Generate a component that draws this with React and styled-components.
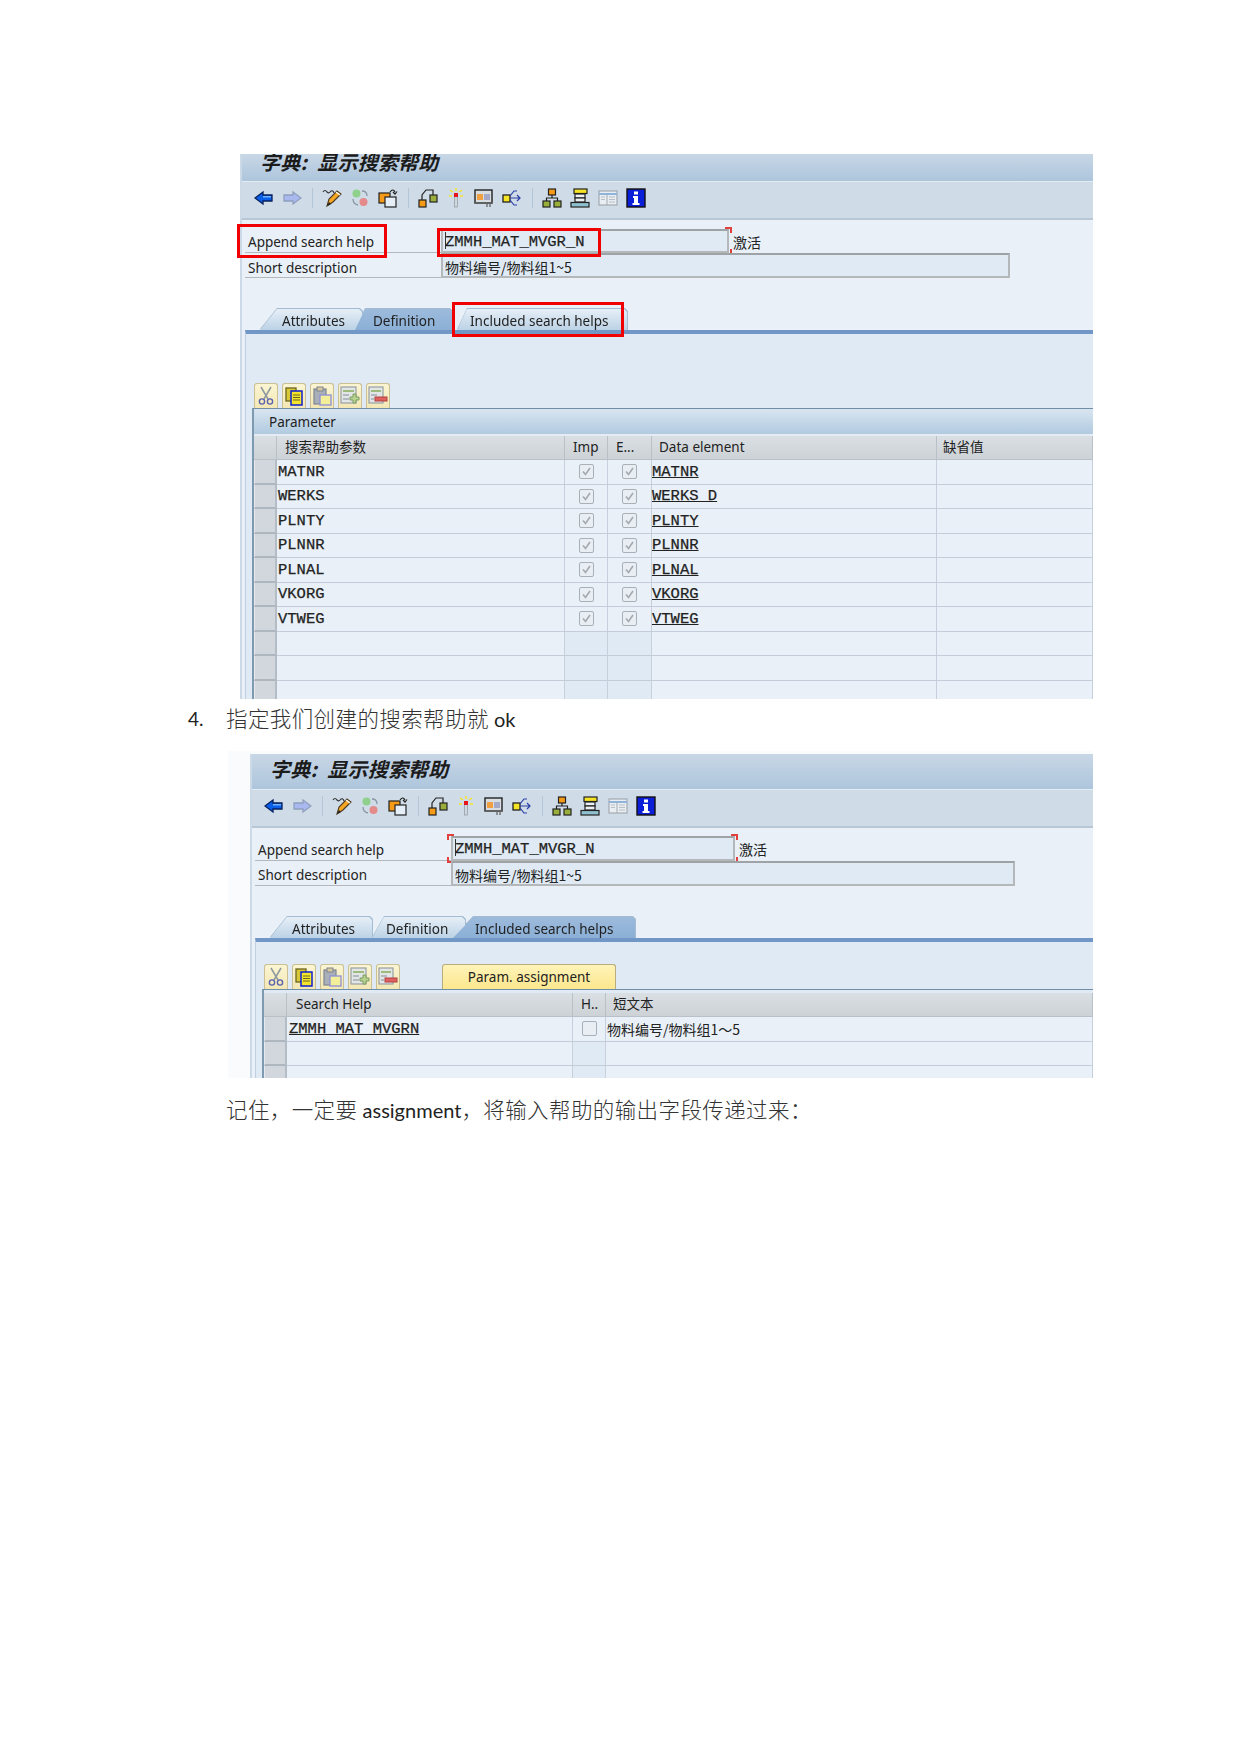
import { createGlobalStyle } from "styled-components";
import styled from "styled-components";

const UI_FONT = `"Noto Sans", "Liberation Sans", "Noto Sans CJK SC", sans-serif`;
const MONO_FONT = `"Liberation Mono", "Noto Sans CJK SC", monospace`;
const CJK_FONT = `"Noto Sans CJK SC", "Liberation Sans", sans-serif`;

const Global = createGlobalStyle`
  html, body { margin: 0; padding: 0; background: #fff; }
  * { box-sizing: border-box; }
`;

const Page = styled.div`
  padding-top: 154px;
  height: 1754px;
  overflow: hidden;
  color: #222;
  font-family: ${UI_FONT};
`;

const Shot = styled.div`
  position: relative;
  margin-left: ${(p) => p.$left}px;
  width: ${(p) => 1093 - p.$left}px;
  height: ${(p) => p.$height}px;
  padding: ${(p) => (p.$pale ? "3px 0 0 22px" : "0")};
  background: ${(p) => (p.$pale ? "#fafbfc" : "transparent")};
`;

const Screen = styled.div`
  display: flex;
  flex-direction: column;
  height: 100%;
  background: #e9f0f7;
  border-left: 2px solid #ccd9e6;
  overflow: hidden;
`;

const Title = styled.div`
  flex: none;
  height: ${(p) => p.$height}px;
  padding-left: 18px;
  overflow: hidden;
  background: linear-gradient(#c8d7e6, #adc5dc);
`;

const TitleText = styled.div`
  margin-top: ${(p) => p.$shift}px;
  font: italic 700 20px/32px ${CJK_FONT};
  letter-spacing: 0.2px;
  color: #1c1c1c;
`;

const Toolbar = styled.div`
  flex: none;
  display: flex;
  align-items: center;
  height: 39px;
  padding: 0 0 4px 8px;
  background: #cfdce7;
  border-top: 1px solid #e3ebf3;
  border-bottom: 2px solid #b8c7d6;
`;

const ToolGroup = styled.div`
  display: flex;
`;

const ToolSlot = styled.div`
  width: 28px;
  display: flex;
  justify-content: center;
`;

const ToolSep = styled.div`
  width: 12px;
  display: flex;
  justify-content: center;
  &::before {
    content: "";
    width: 1px;
    height: 20px;
    background: #b3c5d6;
  }
`;

const Form = styled.div`
  flex: none;
  padding: ${(p) => p.$top}px 0 ${(p) => p.$bottom}px 3px;
`;

const FormRow = styled.div`
  display: flex;
  height: ${(p) => p.$height}px;
`;

const FieldLabel = styled.div`
  width: 196px;
  padding-left: 3px;
  font-size: 13.5px;
  line-height: ${(p) => p.$line}px;
  border-bottom: 1px solid #b4b8bc;
`;

const FieldBox = styled.div`
  position: relative;
  width: ${(p) => p.$width}px;
  height: 100%;
  padding-left: 2px;
  white-space: nowrap;
  font: ${(p) => (p.$mono ? `15.5px/23px ${MONO_FONT}` : `14px/24px ${CJK_FONT}`)};
  -webkit-text-stroke: ${(p) => (p.$mono ? "0.25px" : "0")};
  background: #dfeaf4;
  border: 2px solid #b4b8ba;
  border-top-color: #a0a3a5;
`;

const Caret = styled.span`
  display: inline-block;
  width: 1px;
  height: 17px;
  margin-right: -1px;
  vertical-align: -3px;
  background: #333;
`;

const RequiredMark = styled.span`
  position: absolute;
  width: 7px;
  height: 6px;
  ${(p) => (p.$right ? "right: -5px;" : "left: -6px;")}
  ${(p) => (p.$bottom ? "bottom: -4px;" : "top: -4px;")}
  border: 0 solid #e0413f;
  ${(p) => (p.$bottom ? "border-bottom-width: 2px;" : "border-top-width: 2px;")}
  ${(p) => (p.$right ? "border-right-width: 2px;" : "border-left-width: 2px;")}
`;

const StatusText = styled.span`
  margin-left: 4px;
  font: 14px/26px ${CJK_FONT};
`;

const TabStrip = styled.div`
  flex: none;
  display: flex;
  height: 21px;
  padding-left: 18px;
  filter: drop-shadow(0 -1px 0 #a3bbd3) drop-shadow(1px 0 0 #a3bbd3);
`;

const Tab = styled.div`
  position: relative;
  z-index: ${(p) => (p.$active ? 2 : 1)};
  width: ${(p) => p.$width}px;
  margin-left: ${(p) => p.$overlap}px;
  padding-left: ${(p) => p.$textLeft}px;
  font-size: 13.5px;
  line-height: 24px;
  white-space: nowrap;
  clip-path: polygon(0 100%, ${(p) => p.$slant}px 0, calc(100% - 3px) 0, 100% 3px, 100% 100%);
  background: ${(p) =>
    p.$active ? "linear-gradient(#9dbbdc, #8bafd6)" : "linear-gradient(#e6eff7, #bcd2e6)"};
`;

const Panel = styled.div`
  flex: 1;
  min-height: 0;
  margin-left: 3px;
  padding: ${(p) => p.$top}px 0 0 8px;
  background: #dfeaf4;
  border-left: 1px solid #bfcfdf;
  border-top: 4px solid #7097c6;
`;

const ButtonRow = styled.div`
  display: flex;
  gap: 4px;
  height: 25px;
`;

const TableButton = styled.div`
  width: 24px;
  height: 25px;
  display: flex;
  align-items: center;
  justify-content: center;
  background: linear-gradient(#fbf5d2, #f3e7b4);
  border: 1px solid #cabf95;
  border-bottom: none;
  border-radius: 3px 3px 0 0;
`;

const TextButton = styled.div`
  width: 174px;
  height: 25px;
  margin-left: 38px;
  text-align: center;
  font-size: 13.5px;
  line-height: 25px;
  background: linear-gradient(#fff3b8, #fbe78e);
  border: 1px solid #b9ad7f;
  border-bottom: none;
  border-radius: 3px 3px 0 0;
`;

const Table = styled.div`
  margin-left: -2px;
  padding-top: ${(p) => p.$gap || 0}px;
  border-top: 1px solid #708fa6;
  border-left: 2px solid #7e9ab0;
`;

const TableTitle = styled.div`
  height: 27px;
  padding-left: 15px;
  font-size: 13.5px;
  line-height: 26px;
  border-bottom: 2px solid #e4ebf2;
  background: linear-gradient(#d8e5f0, #b1cae0);
`;

const Row = styled.div`
  display: grid;
  grid-template-columns: ${(p) => p.$columns};
  height: ${(p) => (p.$head ? 24 : 24.5)}px;
`;

const HeadCell = styled.div`
  padding-left: ${(p) => p.$pad}px;
  font-size: 13.5px;
  line-height: 23px;
  white-space: nowrap;
  overflow: hidden;
  background: linear-gradient(#dadfe4, #cdd2d7);
  border-right: 1px solid #b9c0c8;
  border-bottom: 1px solid #b9c0c8;
`;

const Selector = styled.div`
  background: #d1d7dd;
  border-right: 2px solid #b4bcc6;
  border-bottom: 2px solid #aeb6c0;
  border-left: 1px solid #e6eaee;
`;

const Cell = styled.div`
  display: flex;
  align-items: center;
  justify-content: ${(p) => (p.$center ? "center" : "flex-start")};
  padding-left: ${(p) => p.$pad ?? 1}px;
  min-width: 0;
  white-space: nowrap;
  font: ${(p) => (p.$cjk ? `14px/22px ${CJK_FONT}` : `15.5px/22px ${MONO_FONT}`)};
  -webkit-text-stroke: ${(p) => (p.$cjk ? "0" : "0.25px")};
  text-decoration: ${(p) => (p.$link ? "underline" : "none")};
  background: ${(p) => (p.$tint ? "#dfeaf4" : "#e9f0f7")};
  border-right: 1px solid #c6d0dc;
  border-bottom: 1px solid #c3ccd8;
`;

const CheckBox = styled.div`
  width: 15px;
  height: 15px;
  display: flex;
  align-items: center;
  justify-content: center;
  background: #e8eef4;
  border: 1px solid #a9b0b8;
  border-radius: 2px;
`;

const Highlight = styled.div`
  position: absolute;
  left: ${(p) => p.$x}px;
  top: ${(p) => p.$y}px;
  width: ${(p) => p.$w}px;
  height: ${(p) => p.$h}px;
  border: 3px solid #f00000;
  pointer-events: none;
`;

const Para = styled.div`
  display: flex;
  align-items: center;
  height: ${(p) => p.$height}px;
  padding-left: ${(p) => p.$left}px;
  padding-bottom: ${(p) => p.$lift || 0}px;
  font: 300 21.5px/1 ${CJK_FONT};
  letter-spacing: 0.4px;
  color: #333;
  white-space: nowrap;
`;

const Marker = styled.span`
  width: 38px;
  font: 19px/1 Lato, sans-serif;
  letter-spacing: 0;
  color: #222;
`;

const Latin = styled.span`
  font: 20px/1 Lato, sans-serif;
  letter-spacing: 0;
  color: #222;
`;

const Icon = ({ children, size = 20 }) => (
  <svg width={size} height={size} viewBox="0 0 20 20">
    {children}
  </svg>
);

const BackIcon = () => (
  <Icon>
    <path d="M1 10 L9 4 V7 H18 V13 H9 V16 Z" fill="#0a5fe8" stroke="#06205c" strokeWidth="1.3" />
    <path d="M9 8 H17 V9.5 H9 Z" fill="#6fb1ff" />
  </Icon>
);

const ForwardIcon = () => (
  <Icon>
    <path d="M19 10 L11 4 V7 H2 V13 H11 V16 Z" fill="#a9b8ee" stroke="#8f9fbe" strokeWidth="1.3" />
  </Icon>
);

const PencilIcon = () => (
  <Icon>
    <path d="M1 4 Q3 1 5 4 Q7 6 9 3 Q11 2 12 5" fill="none" stroke="#333" strokeWidth="1.2" />
    <path d="M5 18 L7 11 L15 3 L19 6 L11 14 Z" fill="#f5a623" stroke="#4a3a20" strokeWidth="1.1" />
    <path d="M5 18 L7 14 L9 16 Z" fill="#222" />
    <path d="M14 4 L18 7" stroke="#f4f4f4" strokeWidth="1.5" />
  </Icon>
);

const ActivateIcon = () => (
  <Icon>
    <circle cx="6.5" cy="5.5" r="4" fill="#8fd08c" />
    <circle cx="13.5" cy="14" r="4" fill="#e58a8a" />
    <path d="M12 3 Q17 3 17 8 M8 17 Q3 16 3 11" fill="none" stroke="#8897a5" strokeWidth="1.3" />
  </Icon>
);

const TransportIcon = () => (
  <Icon>
    <rect x="1" y="5" width="11" height="10" fill="#f59a16" stroke="#222" strokeWidth="1.2" />
    <rect x="7" y="9" width="11" height="10" fill="#e6eef8" stroke="#222" strokeWidth="1.2" />
    <path d="M12 4 Q15 0 17 4 M15 4 L17 6 L19 3.5" fill="none" stroke="#222" strokeWidth="1.2" />
  </Icon>
);

const LinkedIcon = () => (
  <Icon>
    <rect x="1" y="12" width="7" height="7" fill="#f59a16" stroke="#222" strokeWidth="1.2" />
    <rect x="12" y="7" width="7" height="7" fill="#9aae3c" stroke="#222" strokeWidth="1.2" />
    <path d="M4 12 V7 L8 2 H15 V7" fill="none" stroke="#222" strokeWidth="1.2" />
  </Icon>
);

const WandIcon = () => (
  <Icon>
    <rect x="8.5" y="8" width="3" height="11" fill="#cfd6dc" stroke="#8a98a6" strokeWidth="0.7" />
    <rect x="8" y="5" width="4" height="4" fill="#e8141c" />
    <path d="M10 0 V3 M4 2 L7 4 M16 2 L13 4 M3 8 H6 M14 8 H17" stroke="#f5e325" strokeWidth="1.5" />
  </Icon>
);

const ScreenIcon = () => (
  <Icon>
    <rect x="1" y="2" width="17" height="13" fill="#d8dde2" stroke="#222" strokeWidth="1.4" />
    <rect x="3" y="6" width="6" height="6" fill="#f0a040" />
    <rect x="10" y="6" width="6" height="6" fill="#a3a9c6" />
    <path d="M1 15 H19 M13 16 V19 M16 16 V19" stroke="#666" strokeWidth="1.3" />
  </Icon>
);

const BranchIcon = () => (
  <Icon>
    <rect x="1" y="7" width="7" height="7" fill="#f5e325" stroke="#222" strokeWidth="1.3" />
    <path d="M8 10 H18 M15 7 L18 10 L15 13 M8 8 L12 3 H15 M8 12 L12 17 H15" fill="none" stroke="#2a3fa8" strokeWidth="1.2" />
  </Icon>
);

const HierarchyIcon = () => (
  <Icon>
    <rect x="6.5" y="1" width="7" height="6" fill="#f59a16" stroke="#222" strokeWidth="1.2" />
    <rect x="1" y="13" width="7" height="6" fill="#9aae3c" stroke="#222" strokeWidth="1.2" />
    <rect x="12" y="13" width="7" height="6" fill="#9aae3c" stroke="#222" strokeWidth="1.2" />
    <path d="M10 7 V10 M4.5 13 V10 H15.5 V13" fill="none" stroke="#222" strokeWidth="1.2" />
  </Icon>
);

const StackIcon = () => (
  <Icon>
    <rect x="4" y="1" width="13" height="4.5" fill="#f5e325" stroke="#222" strokeWidth="1.2" />
    <rect x="5" y="6" width="10" height="4" fill="#eef1f4" stroke="#222" strokeWidth="1.2" />
    <rect x="5" y="10" width="10" height="4" fill="#eef1f4" stroke="#222" strokeWidth="1.2" />
    <rect x="1" y="14.5" width="18" height="4.5" fill="#8fc0cf" stroke="#222" strokeWidth="1.2" />
  </Icon>
);

const ColumnsIcon = () => (
  <Icon>
    <rect x="1" y="3" width="18" height="14" fill="#e9eef3" stroke="#a3aab2" strokeWidth="1.2" />
    <path d="M1 6 H19" stroke="#8fb4dc" strokeWidth="2" />
    <path d="M9 6 V17" stroke="#a3aab2" />
    <path d="M11 9 H17 M11 11.5 H17 M11 14 H17 M3 9 H7 M3 11.5 H7" stroke="#b8bec5" />
  </Icon>
);

const InfoIcon = () => (
  <Icon>
    <rect x="1" y="1" width="18" height="18" fill="#0b1fd8" stroke="#111" strokeWidth="1.4" />
    <rect x="8" y="3.5" width="4" height="3" fill="#fff" />
    <path d="M7 8 H12 V15 H13.5 V17 H6.5 V15 H8 V10 H7 Z" fill="#fff" />
  </Icon>
);

const ScissorsIcon = () => (
  <Icon>
    <path d="M5 1 L12 13 M15 1 L8 13" stroke="#8d9aa0" strokeWidth="1.5" />
    <circle cx="6" cy="15.5" r="2.6" fill="none" stroke="#5a62b0" strokeWidth="1.4" />
    <circle cx="14" cy="15.5" r="2.6" fill="none" stroke="#5a62b0" strokeWidth="1.4" />
  </Icon>
);

const CopyIcon = () => (
  <Icon>
    <rect x="2" y="2" width="10" height="13" fill="#d8c838" stroke="#6a6420" strokeWidth="1.3" />
    <rect x="7" y="5" width="11" height="14" fill="#f3e52c" stroke="#0f1fd0" strokeWidth="1.5" />
    <path d="M9 9 H16 M9 11.5 H16 M9 14 H16" stroke="#6a6420" />
  </Icon>
);

const PasteIcon = () => (
  <Icon>
    <rect x="2" y="3" width="12" height="15" fill="#a9b0ba" stroke="#7d8590" strokeWidth="1.2" />
    <rect x="5" y="1" width="6" height="4" fill="#d8c9a0" stroke="#7d8590" />
    <rect x="8" y="9" width="11" height="10" fill="#f3ee9a" stroke="#8d90d8" strokeWidth="1.3" />
  </Icon>
);

const RowAddIcon = () => (
  <Icon>
    <rect x="1" y="1" width="15" height="16" fill="#e3e6e6" stroke="#98a0a2" strokeWidth="1.2" />
    <path d="M3 5 H14" stroke="#9dbb7c" strokeWidth="2" />
    <path d="M3 9 H9 M3 13 H9" stroke="#a3aab2" strokeWidth="1.6" />
    <path d="M13 8 H16 V11 H19 V14 H16 V17 H13 V14 H10 V11 H13 Z" fill="#b6d28c" stroke="#7f9c68" />
  </Icon>
);

const RowRemoveIcon = () => (
  <Icon>
    <rect x="1" y="1" width="14" height="16" fill="#e3e6e6" stroke="#98a0a2" strokeWidth="1.2" />
    <path d="M3 5 H13" stroke="#9dbb7c" strokeWidth="2" />
    <path d="M3 9 H9 M3 13 H6" stroke="#a3aab2" strokeWidth="1.6" />
    <rect x="7" y="11" width="12" height="4" fill="#e06060" stroke="#b04040" />
  </Icon>
);

const Tick = () => (
  <svg width="11" height="11" viewBox="0 0 11 11">
    <path d="M2 5.5 L4.5 8.5 L9 2" fill="none" stroke="#a3a9af" strokeWidth="1.6" />
  </svg>
);

const toolGroups = [
  [BackIcon, ForwardIcon],
  [PencilIcon, ActivateIcon, TransportIcon],
  [LinkedIcon, WandIcon, ScreenIcon, BranchIcon],
  [HierarchyIcon, StackIcon, ColumnsIcon, InfoIcon],
];

const tableButtons = [ScissorsIcon, CopyIcon, PasteIcon, RowAddIcon, RowRemoveIcon];

const parameters = [
  ["MATNR", "MATNR"],
  ["WERKS", "WERKS_D"],
  ["PLNTY", "PLNTY"],
  ["PLNNR", "PLNNR"],
  ["PLNAL", "PLNAL"],
  ["VKORG", "VKORG"],
  ["VTWEG", "VTWEG"],
];

const PARAM_COLUMNS = "23px 288px 43px 44px 285px 1fr";
const HELP_COLUMNS = "23px 286px 33px 1fr";

function SapToolbar() {
  return (
    <Toolbar>
      {toolGroups.map((group, i) => (
        <ToolGroup key={i}>
          {i > 0 && <ToolSep />}
          {group.map((Item, j) => (
            <ToolSlot key={j}>
              <Item />
            </ToolSlot>
          ))}
        </ToolGroup>
      ))}
    </Toolbar>
  );
}

function TableButtons({ children }) {
  return (
    <ButtonRow>
      {tableButtons.map((Item, i) => (
        <TableButton key={i}>
          <Item />
        </TableButton>
      ))}
      {children}
    </ButtonRow>
  );
}

function Check({ ticked }) {
  return <CheckBox>{ticked && <Tick />}</CheckBox>;
}

export default function App() {
  return (
    <Page>
      <Global />

      <Shot $left={240} $height={545}>
        <Screen>
          <Title $height={27}>
            <TitleText $shift={-8}>字典:{"\u2002"}显示搜索帮助</TitleText>
          </Title>
          <SapToolbar />
          <Form $top={9} $bottom={31}>
            <FormRow $height={24}>
              <FieldLabel $line={27}>Append search help</FieldLabel>
              <FieldBox $width={288} $mono>
                <Caret />
                ZMMH_MAT_MVGR_N
                <RequiredMark $right />
                <RequiredMark $right $bottom />
              </FieldBox>
              <StatusText>激活</StatusText>
            </FormRow>
            <FormRow $height={25}>
              <FieldLabel $line={31}>Short description</FieldLabel>
              <FieldBox $width={569}>物料编号/物料组1~5</FieldBox>
            </FormRow>
          </Form>
          <TabStrip>
            <Tab $width={102} $overlap={0} $slant={17} $textLeft={22}>Attributes</Tab>
            <Tab $active $width={97} $overlap={-7} $slant={10} $textLeft={18}>Definition</Tab>
            <Tab $width={170} $overlap={5} $slant={10} $textLeft={13}>Included search helps</Tab>
          </TabStrip>
          <Panel $top={49}>
            <TableButtons />
            <Table>
              <TableTitle>Parameter</TableTitle>
              <Row $head $columns={PARAM_COLUMNS}>
                <HeadCell $pad={0} />
                <HeadCell $pad={8}>搜索帮助参数</HeadCell>
                <HeadCell $pad={8}>Imp</HeadCell>
                <HeadCell $pad={8}>E...</HeadCell>
                <HeadCell $pad={7}>Data element</HeadCell>
                <HeadCell $pad={6}>缺省值</HeadCell>
              </Row>
              {parameters.map(([name, element]) => (
                <Row key={name} $columns={PARAM_COLUMNS}>
                  <Selector />
                  <Cell>{name}</Cell>
                  <Cell $center $pad={0}><Check ticked /></Cell>
                  <Cell $center $pad={0}><Check ticked /></Cell>
                  <Cell $link $pad={0}>{element}</Cell>
                  <Cell />
                </Row>
              ))}
              {[0, 1, 2].map((i) => (
                <Row key={i} $columns={PARAM_COLUMNS}>
                  <Selector />
                  <Cell />
                  <Cell $tint />
                  <Cell $tint />
                  <Cell />
                  <Cell />
                </Row>
              ))}
            </Table>
          </Panel>
        </Screen>
        <Highlight $x={-3} $y={70} $w={150} $h={34} />
        <Highlight $x={197} $y={74} $w={164} $h={29} />
        <Highlight $x={212} $y={148} $w={172} $h={35} />
      </Shot>

      <Para $height={52} $left={188} $lift={14}>
        <Marker>4.</Marker>
        <span>指定我们创建的搜索帮助就 <Latin>ok</Latin></span>
      </Para>

      <Shot $left={228} $height={327} $pale>
        <Screen>
          <Title $height={35}>
            <TitleText $shift={-1}>字典:{"\u2002"}显示搜索帮助</TitleText>
          </Title>
          <SapToolbar />
          <Form $top={8} $bottom={31}>
            <FormRow $height={25}>
              <FieldLabel $line={28}>Append search help</FieldLabel>
              <FieldBox $width={284} $mono>
                <Caret />
                ZMMH_MAT_MVGR_N
                <RequiredMark />
                <RequiredMark $bottom />
                <RequiredMark $right />
                <RequiredMark $right $bottom />
              </FieldBox>
              <StatusText>激活</StatusText>
            </FormRow>
            <FormRow $height={25}>
              <FieldLabel $line={29}>Short description</FieldLabel>
              <FieldBox $width={564}>物料编号/物料组1~5</FieldBox>
            </FormRow>
          </Form>
          <TabStrip>
            <Tab $width={102} $overlap={0} $slant={17} $textLeft={22}>Attributes</Tab>
            <Tab $width={93} $overlap={0} $slant={12} $textLeft={14}>Definition</Tab>
            <Tab $active $width={182} $overlap={-12} $slant={20} $textLeft={22}>Included search helps</Tab>
          </TabStrip>
          <Panel $top={22}>
            <TableButtons>
              <TextButton>Param. assignment</TextButton>
            </TableButtons>
            <Table $gap={3}>
              <Row $head $columns={HELP_COLUMNS}>
                <HeadCell $pad={0} />
                <HeadCell $pad={9}>Search Help</HeadCell>
                <HeadCell $pad={8}>H..</HeadCell>
                <HeadCell $pad={7}>短文本</HeadCell>
              </Row>
              <Row $columns={HELP_COLUMNS}>
                <Selector />
                <Cell $pad={2} $link>ZMMH_MAT_MVGRN</Cell>
                <Cell $center $pad={0}><Check /></Cell>
                <Cell $cjk>{"物料编号/物料组1\uFF5E5"}</Cell>
              </Row>
              {[0, 1].map((i) => (
                <Row key={i} $columns={HELP_COLUMNS}>
                  <Selector />
                  <Cell />
                  <Cell $tint />
                  <Cell />
                </Row>
              ))}
            </Table>
          </Panel>
        </Screen>
      </Shot>

      <Para $height={62} $left={226}>
        <span>{"记住\uFF0C一定要 "}<Latin>assignment</Latin>{"\uFF0C将输入帮助的输出字段传递过来\uFF1A"}</span>
      </Para>
    </Page>
  );
}
